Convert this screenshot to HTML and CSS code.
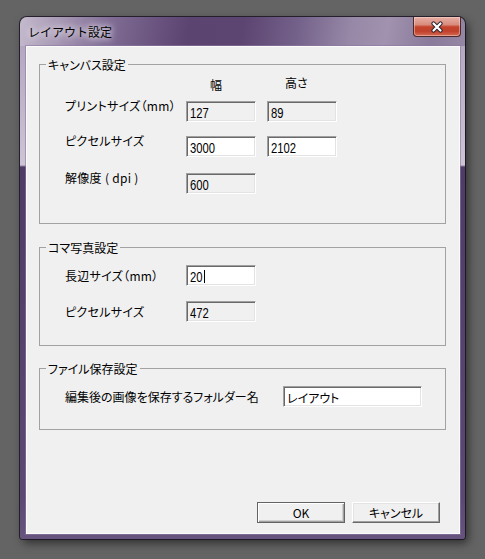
FILE: index.html
```html
<!DOCTYPE html>
<html lang="ja">
<head>
<meta charset="utf-8">
<title>レイアウト設定</title>
<link rel="stylesheet" href="styles.css">
</head>
<body>
<div class="window">
  <div class="titlebar">
    <span class="title">レイアウト設定</span>
    <span class="close">
      <svg width="14" height="12" viewBox="0 0 14 12">
        <path d="M3.5 2.5 L10.5 9.5 M10.5 2.5 L3.5 9.5" stroke="#2d2431" stroke-width="4.2" stroke-linecap="round"/>
        <path d="M3.5 2.5 L10.5 9.5 M10.5 2.5 L3.5 9.5" stroke="#ffffff" stroke-width="2.2" stroke-linecap="round"/>
      </svg>
    </span>
  </div>
  <div class="client">
    <fieldset class="group g1">
      <legend>キャンバス設定</legend>
      <div class="body">
        <div class="row head">
          <span class="lbl"></span>
          <span class="hcell hw">幅</span>
          <span class="hcell hh">高さ</span>
        </div>
        <div class="row top r1">
          <span class="lbl">プリントサイズ（mm）</span>
          <div class="field ro"><span class="v">127</span></div>
          <div class="field ro"><span class="v">89</span></div>
        </div>
        <div class="row top r2">
          <span class="lbl">ピクセルサイズ</span>
          <div class="field"><span class="v">3000</span></div>
          <div class="field"><span class="v">2102</span></div>
        </div>
        <div class="row top r3">
          <span class="lbl">解像度 ( dpi )</span>
          <div class="field ro"><span class="v">600</span></div>
        </div>
      </div>
    </fieldset>

    <fieldset class="group g2">
      <legend>コマ写真設定</legend>
      <div class="body">
        <div class="row mid r1">
          <span class="lbl">長辺サイズ（mm）</span>
          <div class="field"><span class="v">20</span><span class="caret"></span></div>
        </div>
        <div class="row mid r2">
          <span class="lbl">ピクセルサイズ</span>
          <div class="field ro"><span class="v">472</span></div>
        </div>
      </div>
    </fieldset>

    <fieldset class="group g3">
      <legend>ファイル保存設定</legend>
      <div class="body">
        <div class="row mid r1">
          <span class="lbl wide">編集後の画像を保存するフォルダー名</span>
          <div class="field long jp">レイアウト</div>
        </div>
      </div>
    </fieldset>

    <div class="buttons">
      <button class="btn default">OK</button>
      <button class="btn">キャンセル</button>
    </div>
  </div>
</div>
</body>
</html>
```

FILE: styles.css
```css
html, body {
  margin: 0;
  padding: 0;
}
body {
  width: 485px;
  height: 559px;
  overflow: hidden;
  background: #646464;
  font-family: "Noto Sans CJK JP", "Noto Sans", sans-serif;
  font-size: 12px;
  color: #000;
}

.window {
  box-sizing: border-box;
  width: 445px;
  height: 522px;
  margin: 17px 0 0 20px;
  padding: 0 5px 5px 6px;
  border-radius: 7px 7px 3px 3px;
  display: flex;
  flex-direction: column;
  background:
    linear-gradient(100deg, #c4bacd 0%, #a899b5 9%, #806c95 20%, #5b4470 38%, #5c4571 50%, #74618a 62%, #9788a7 74%, #a192af 82%, #8a7a9b 92%, #9587a4 100%) top / 100% 29px no-repeat,
    linear-gradient(to bottom, #ada1bb 0, #cdc4d6 148px, #4f3c66 150px, #5b4873 480px, #66547f 100%);
  box-shadow: 0 0 0 1px rgba(20, 12, 28, 0.75), 3px 4px 10px rgba(0, 0, 0, 0.55);
}

.titlebar {
  height: 29px;
  display: flex;
  justify-content: space-between;
  align-items: flex-start;
  flex: none;
}
.title {
  margin-left: 2px;
  padding-top: 8px;
  line-height: 14px;
  font-size: 12px;
  color: #000;
  text-shadow: 0 0 6px #fff, 0 0 10px rgba(255, 255, 255, 0.9);
}
.close {
  box-sizing: border-box;
  width: 48px;
  height: 20px;
  margin-right: -1px;
  border: 1px solid #4b2a2c;
  border-top-width: 0;
  border-radius: 0 0 4px 4px;
  background: linear-gradient(#e6b0a6 0%, #d98c7c 40%, #c4432c 52%, #c0412b 75%, #d46b56 100%);
  box-shadow: inset 0 0 0 1px rgba(255, 225, 215, 0.45);
  display: flex;
  align-items: center;
  justify-content: center;
}
.close svg {
  display: block;
}

.client {
  box-sizing: border-box;
  width: 434px;
  height: 488px;
  background: #f0f0f0;
  border: 1px solid #fbfbfb;
  box-shadow: 0 0 0 1px rgba(140, 120, 160, 0.6);
  padding: 10px 0 10px 12px;
  display: flex;
  flex-direction: column;
}

.group {
  box-sizing: border-box;
  width: 407px;
  margin: 0;
  padding: 0;
  border: 1px solid #a2a2a2;
  min-inline-size: 0;
}
.group legend {
  margin-left: 6px;
  padding: 0 2px;
  line-height: 15px;
  font-size: 12px;
  font-feature-settings: "palt";
}
.g2 { margin-top: 16px; }
.g3 { margin-top: 15px; }

.body {
  padding-left: 25px;
}
.g1 .body { padding-bottom: 29px; }
.g2 .body { padding-bottom: 23px; }
.g3 .body { padding-bottom: 22px; }

.row {
  display: flex;
}
.row.top { align-items: flex-start; }
.row.mid { align-items: center; }

.lbl {
  width: 121px;
  flex: none;
  line-height: 14px;
  font-feature-settings: "palt";
  letter-spacing: 0.3px;
  white-space: nowrap;
}
.lbl.wide { width: 218px; letter-spacing: 0; }
.row.top .lbl { margin-top: -2px; }

.head {
  margin-top: 6px;
  height: 14px;
  line-height: 14px;
}
.hcell { flex: none; font-feature-settings: "palt"; }
.hw { width: 81px; padding-left: 24px; box-sizing: border-box; }
.hh { padding-left: 18px; margin-top: -2px; }

.g1 .r1 { margin-top: 9px; }
.g1 .r2 { margin-top: 14px; }
.g1 .r3 { margin-top: 16px; }
.g2 .r1 { margin-top: 10px; }
.g2 .r2 { margin-top: 15px; }
.g3 .r1 { margin-top: 10px; }

.field {
  box-sizing: border-box;
  width: 70px;
  height: 21px;
  flex: none;
  padding: 1px 0 0 3px;
  background: #fff;
  border-top: 1px solid #a0a0a0;
  border-left: 1px solid #a0a0a0;
  border-bottom: 1px solid #ffffff;
  border-right: 1px solid #ffffff;
  box-shadow: inset 1px 1px 0 #696969, inset -1px -1px 0 #e3e3e3;
  font-family: "Liberation Sans", "Arial", sans-serif;
  font-size: 15px;
  line-height: 17px;
  display: flex;
  align-items: center;
  white-space: nowrap;
}
.field .v {
  display: inline-block;
  transform: scaleX(0.75);
  transform-origin: left center;
}
.field + .field { margin-left: 11px; }
.field.ro { background: #f0f0f0; }
.field.long { width: 139px; }
.field.jp {
  font-family: "Noto Sans CJK JP", sans-serif;
  font-size: 12px;
  font-feature-settings: "palt";
}
.caret {
  display: inline-block;
  width: 1px;
  height: 13px;
  background: #000;
  margin-left: -3px;
}

.buttons {
  margin-top: auto;
  display: flex;
  justify-content: flex-end;
  gap: 7px;
  padding-right: 19px;
}
.btn {
  box-sizing: border-box;
  width: 88px;
  height: 21px;
  margin: 0;
  padding: 0;
  background: #f0f0f0;
  border-top: 1px solid #ffffff;
  border-left: 1px solid #ffffff;
  border-right: 1px solid #696969;
  border-bottom: 1px solid #696969;
  box-shadow: inset -1px -1px 0 #a0a0a0, inset 1px 1px 0 #e3e3e3;
  font-family: "Noto Sans CJK JP", sans-serif;
  font-size: 12px;
  line-height: 17px;
  color: #000;
  font-feature-settings: "palt";
}
.btn.default {
  border: 1px solid #646464;
  box-shadow: inset 1px 1px 0 #ffffff, inset -1px -1px 0 #a0a0a0, inset -2px -2px 0 #d0d0d0;
}
```
